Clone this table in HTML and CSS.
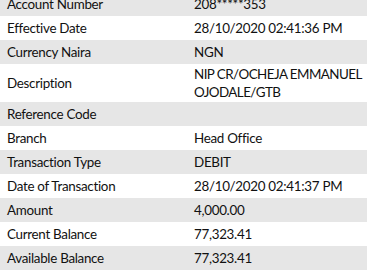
FILE: index.html
```html
<!DOCTYPE html>
<html>
<head>
<meta charset="utf-8">
<link rel="stylesheet" href="styles.css">
</head>
<body>
<table class="details">
  <tr class="shade"><td class="label">Account Number</td><td class="value">208*****353</td></tr>
  <tr><td class="label">Effective Date</td><td class="value">28/10/2020 02:41:36 PM</td></tr>
  <tr class="shade"><td class="label">Currency Naira</td><td class="value">NGN</td></tr>
  <tr><td class="label">Description</td><td class="value tight">NIP CR/OCHEJA EMMANUEL<br>OJODALE/GTB</td></tr>
  <tr class="shade"><td class="label">Reference Code</td><td class="value"></td></tr>
  <tr><td class="label">Branch</td><td class="value">Head Office</td></tr>
  <tr class="shade"><td class="label">Transaction Type</td><td class="value">DEBIT</td></tr>
  <tr><td class="label">Date of Transaction</td><td class="value">28/10/2020 02:41:37 PM</td></tr>
  <tr class="shade"><td class="label">Amount</td><td class="value">4,000.00</td></tr>
  <tr><td class="label">Current Balance</td><td class="value">77,323.41</td></tr>
  <tr class="shade"><td class="label">Available Balance</td><td class="value">77,323.41</td></tr>
</table>
</body>
</html>
```
FILE: styles.css
```css
html, body {
  margin: 0;
  padding: 0;
  background: #ffffff;
}
body {
  font-family: "Lato", "Liberation Sans", sans-serif;
  font-size: 13.4px;
  letter-spacing: -0.3px;
  color: #111111;
  overflow: hidden;
}
.details {
  width: 367px;
  margin-top: -8px;
  border-collapse: collapse;
  table-layout: fixed;
}
.details td {
  height: 24px;
  padding: 1px 7px;
  box-sizing: border-box;
  vertical-align: middle;
  line-height: 18px;
}
.details .label {
  width: 187px;
}
.details .value {
  width: 180px;
  padding-right: 0;
  white-space: nowrap;
}
.details .tight {
  letter-spacing: -0.55px;
}
.details .shade td {
  background: #e6e6e6;
}
```
